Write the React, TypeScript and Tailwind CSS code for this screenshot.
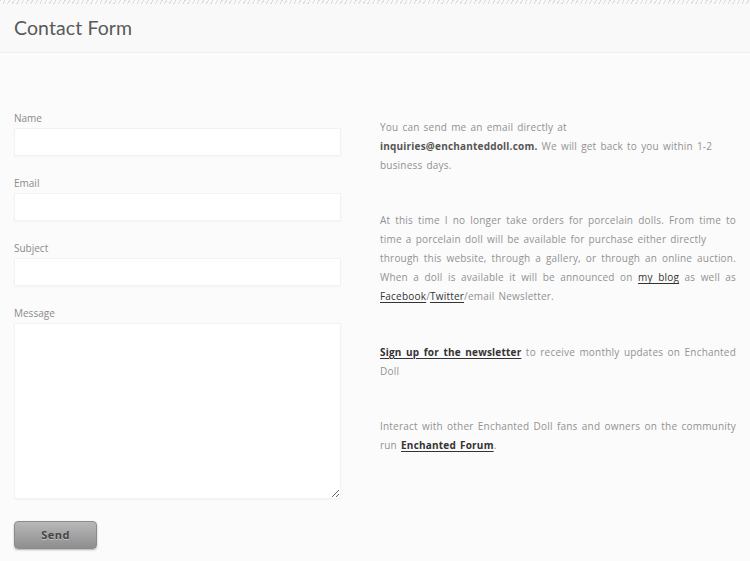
import React from "react";

const body = { fontFamily: '"Open Sans", "DejaVu Sans", sans-serif' };

function Field({ label }: { label: string }) {
  return (
    <div className="mb-[20px]">
      <div className="text-[10px] leading-[14px] text-[#8a8a8a]" style={body}>{label}</div>
      <input className="mt-[3px] block h-[28px] w-[327px] bg-white border border-[#f2f2f2] shadow-[0_1px_2px_rgba(0,0,0,0.03)] outline-none" />
    </div>
  );
}

const J = "block whitespace-nowrap text-justify [text-align-last:justify]";
const L = "block whitespace-nowrap";
const link = "font-bold text-[#333] underline underline-offset-2";

export default function App() {
  return (
    <div className="w-[750px] h-[561px] overflow-hidden bg-[#f9f9f9] relative">
      <div className="h-[4px] w-full bg-[repeating-linear-gradient(120deg,#dcdcdc_0px,#dcdcdc_1px,transparent_1px,transparent_4px)]" />
      <div className="h-[49px] border-b border-[#efefef] px-[14px] pt-[11px]">
        <h1 className="text-[19.5px] leading-[26px] text-[#5a5a5a]" style={{ fontFamily: 'Lato, "Open Sans", sans-serif', letterSpacing: "0.1px" }}>
          Contact Form
        </h1>
      </div>
      <div className="flex bg-[#fbfbfb] h-full">
        <div className="pl-[14px] pt-[58px] w-[380px] shrink-0">
          <Field label="Name" />
          <Field label="Email" />
          <Field label="Subject" />
          <div>
            <div className="text-[10px] leading-[14px] text-[#8a8a8a]" style={body}>Message</div>
            <textarea className="mt-[3px] block h-[176px] w-[327px] bg-white border border-[#f2f2f2] shadow-[0_1px_2px_rgba(0,0,0,0.03)] outline-none" />
          </div>
          <button
            className="mt-[22px] h-[28px] w-[83px] rounded-[4px] border border-[#8c8c8c] bg-[linear-gradient(#b8b8b8,#8e8e8e)] shadow-[0_1px_2px_rgba(0,0,0,0.3)] text-[11px] font-bold text-[#444] [text-shadow:0_1px_0_rgba(255,255,255,0.4)] tracking-[0.5px]"
            style={body}
          >
            Send
          </button>
        </div>
        <div className="pt-[65px] w-[356px] shrink-0 text-[10px] leading-[19.2px] text-[#929292] tracking-[0.2px] [word-spacing:1.3px]" style={body}>
          <p className="mb-[35px]">
            <span className={L}>You can send me an email directly at</span>
            <span className={L}><b className="text-[#555]">inquiries@enchanteddoll.com.</b> We will get back to you within 1-2</span>
            <span className={L}>business days.</span>
          </p>
          <p className="mb-[36px]">
            <span className={J}>At this time I no longer take orders for porcelain dolls. From time to</span>
            <span className={L}>time a porcelain doll will be available for purchase either directly</span>
            <span className={J}>through this website, through a gallery, or through an online auction.</span>
            <span className={J}>When a doll is available it will be announced on <a className="text-[#333] underline underline-offset-2">my blog</a> as well as</span>
            <span className={L}><a className="text-[#333] underline underline-offset-2">Facebook</a>/<a className="text-[#333] underline underline-offset-2">Twitter</a>/email Newsletter.</span>
          </p>
          <p className="mb-[36px]">
            <span className={J}><a className={link}>Sign up for the newsletter</a> to receive monthly updates on Enchanted</span>
            <span className={L}>Doll</span>
          </p>
          <p>
            <span className={J}>Interact with other Enchanted Doll fans and owners on the community</span>
            <span className={L}>run <a className={link}>Enchanted Forum</a>.</span>
          </p>
        </div>
      </div>
    </div>
  );
}
